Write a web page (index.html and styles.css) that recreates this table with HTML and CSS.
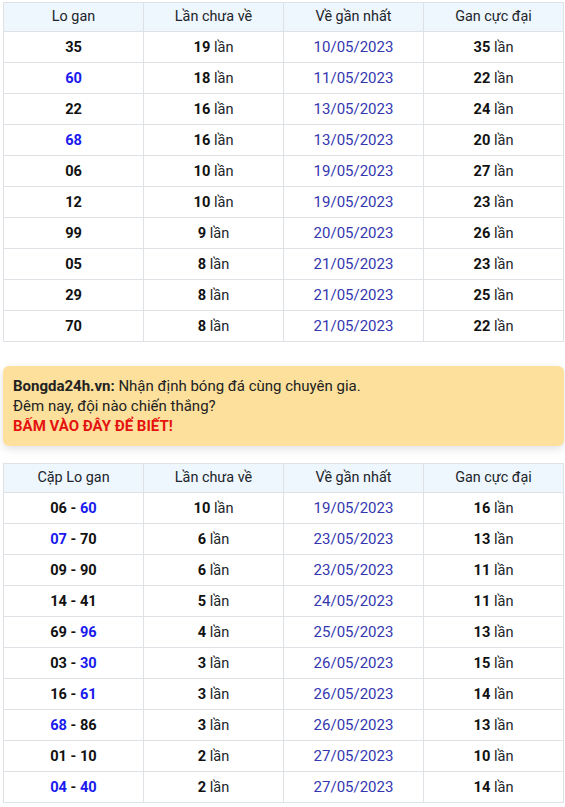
FILE: index.html
```html
<!DOCTYPE html>
<html lang="vi">
<head>
<meta charset="utf-8">
<link rel="stylesheet" href="styles.css">
</head>
<body>
<div class="page">
<table class="gan">
  <thead>
    <tr><th>Lo gan</th><th>Lần chưa về</th><th>Về gần nhất</th><th>Gan cực đại</th></tr>
  </thead>
  <tbody>
    <tr><td><b>35</b></td><td><b>19</b> lần</td><td class="date">10/05/2023</td><td><b>35</b> lần</td></tr>
    <tr><td><b class="hl">60</b></td><td><b>18</b> lần</td><td class="date">11/05/2023</td><td><b>22</b> lần</td></tr>
    <tr><td><b>22</b></td><td><b>16</b> lần</td><td class="date">13/05/2023</td><td><b>24</b> lần</td></tr>
    <tr><td><b class="hl">68</b></td><td><b>16</b> lần</td><td class="date">13/05/2023</td><td><b>20</b> lần</td></tr>
    <tr><td><b>06</b></td><td><b>10</b> lần</td><td class="date">19/05/2023</td><td><b>27</b> lần</td></tr>
    <tr><td><b>12</b></td><td><b>10</b> lần</td><td class="date">19/05/2023</td><td><b>23</b> lần</td></tr>
    <tr><td><b>99</b></td><td><b>9</b> lần</td><td class="date">20/05/2023</td><td><b>26</b> lần</td></tr>
    <tr><td><b>05</b></td><td><b>8</b> lần</td><td class="date">21/05/2023</td><td><b>23</b> lần</td></tr>
    <tr><td><b>29</b></td><td><b>8</b> lần</td><td class="date">21/05/2023</td><td><b>25</b> lần</td></tr>
    <tr><td><b>70</b></td><td><b>8</b> lần</td><td class="date">21/05/2023</td><td><b>22</b> lần</td></tr>
  </tbody>
</table>

<div class="promo">
  <p><b>Bongda24h.vn:</b> Nhận định bóng đá cùng chuyên gia.</p>
  <p>Đêm nay, đội nào chiến thắng?</p>
  <p class="cta">BẤM VÀO ĐÂY ĐỂ BIẾT!</p>
</div>

<table class="gan">
  <thead>
    <tr><th>Cặp Lo gan</th><th>Lần chưa về</th><th>Về gần nhất</th><th>Gan cực đại</th></tr>
  </thead>
  <tbody>
    <tr><td><b>06</b> <b>-</b> <b class="hl">60</b></td><td><b>10</b> lần</td><td class="date">19/05/2023</td><td><b>16</b> lần</td></tr>
    <tr><td><b class="hl">07</b> <b>-</b> <b>70</b></td><td><b>6</b> lần</td><td class="date">23/05/2023</td><td><b>13</b> lần</td></tr>
    <tr><td><b>09</b> <b>-</b> <b>90</b></td><td><b>6</b> lần</td><td class="date">23/05/2023</td><td><b>11</b> lần</td></tr>
    <tr><td><b>14</b> <b>-</b> <b>41</b></td><td><b>5</b> lần</td><td class="date">24/05/2023</td><td><b>11</b> lần</td></tr>
    <tr><td><b>69</b> <b>-</b> <b class="hl">96</b></td><td><b>4</b> lần</td><td class="date">25/05/2023</td><td><b>13</b> lần</td></tr>
    <tr><td><b>03</b> <b>-</b> <b class="hl">30</b></td><td><b>3</b> lần</td><td class="date">26/05/2023</td><td><b>15</b> lần</td></tr>
    <tr><td><b>16</b> <b>-</b> <b class="hl">61</b></td><td><b>3</b> lần</td><td class="date">26/05/2023</td><td><b>14</b> lần</td></tr>
    <tr><td><b class="hl">68</b> <b>-</b> <b>86</b></td><td><b>3</b> lần</td><td class="date">26/05/2023</td><td><b>13</b> lần</td></tr>
    <tr><td><b>01</b> <b>-</b> <b>10</b></td><td><b>2</b> lần</td><td class="date">27/05/2023</td><td><b>10</b> lần</td></tr>
    <tr><td><b class="hl">04</b> <b>-</b> <b class="hl">40</b></td><td><b>2</b> lần</td><td class="date">27/05/2023</td><td><b>14</b> lần</td></tr>
  </tbody>
</table>
</div>
</body>
</html>
```

FILE: styles.css
```css
html, body {
  margin: 0;
  padding: 0;
  background: #fff;
}
body {
  font-family: Roboto, "Liberation Sans", Arial, sans-serif;
  font-size: 14.4px;
  color: #212529;
}
.page {
  padding: 2px 2px 0 3px;
  width: 560px;
}
.gan {
  width: 561px;
  border-collapse: collapse;
  table-layout: fixed;
}
.gan th, .gan td {
  border: 1px solid #dee2e6;
  text-align: center;
  vertical-align: middle;
  height: 30px;
  padding: 0;
  line-height: 18px;
}
.gan td {
  font-size: 14.6px;
}
.gan th {
  background: #eef6fe;
  font-weight: 400;
  height: 28px;
  color: #212529;
}
.gan td b {
  font-weight: 700;
  color: #111;
}
.gan td b.hl {
  color: #1a1aee;
}
.gan td.date {
  color: #3437b0;
  font-size: 15px;
}
.promo {
  margin: 24px 0 17px 0;
  width: 541px;
  background: #fde09c;
  border-radius: 6px;
  box-shadow: 0 3px 8px rgba(0, 0, 0, 0.12);
  padding: 10px 10px 10px 10px;
  font-size: 15px;
  line-height: 20px;
  color: #222;
}
.promo p {
  margin: 0;
}
.promo b {
  font-weight: 700;
}
.promo .cta {
  color: #e5120f;
  font-weight: 700;
}
```
